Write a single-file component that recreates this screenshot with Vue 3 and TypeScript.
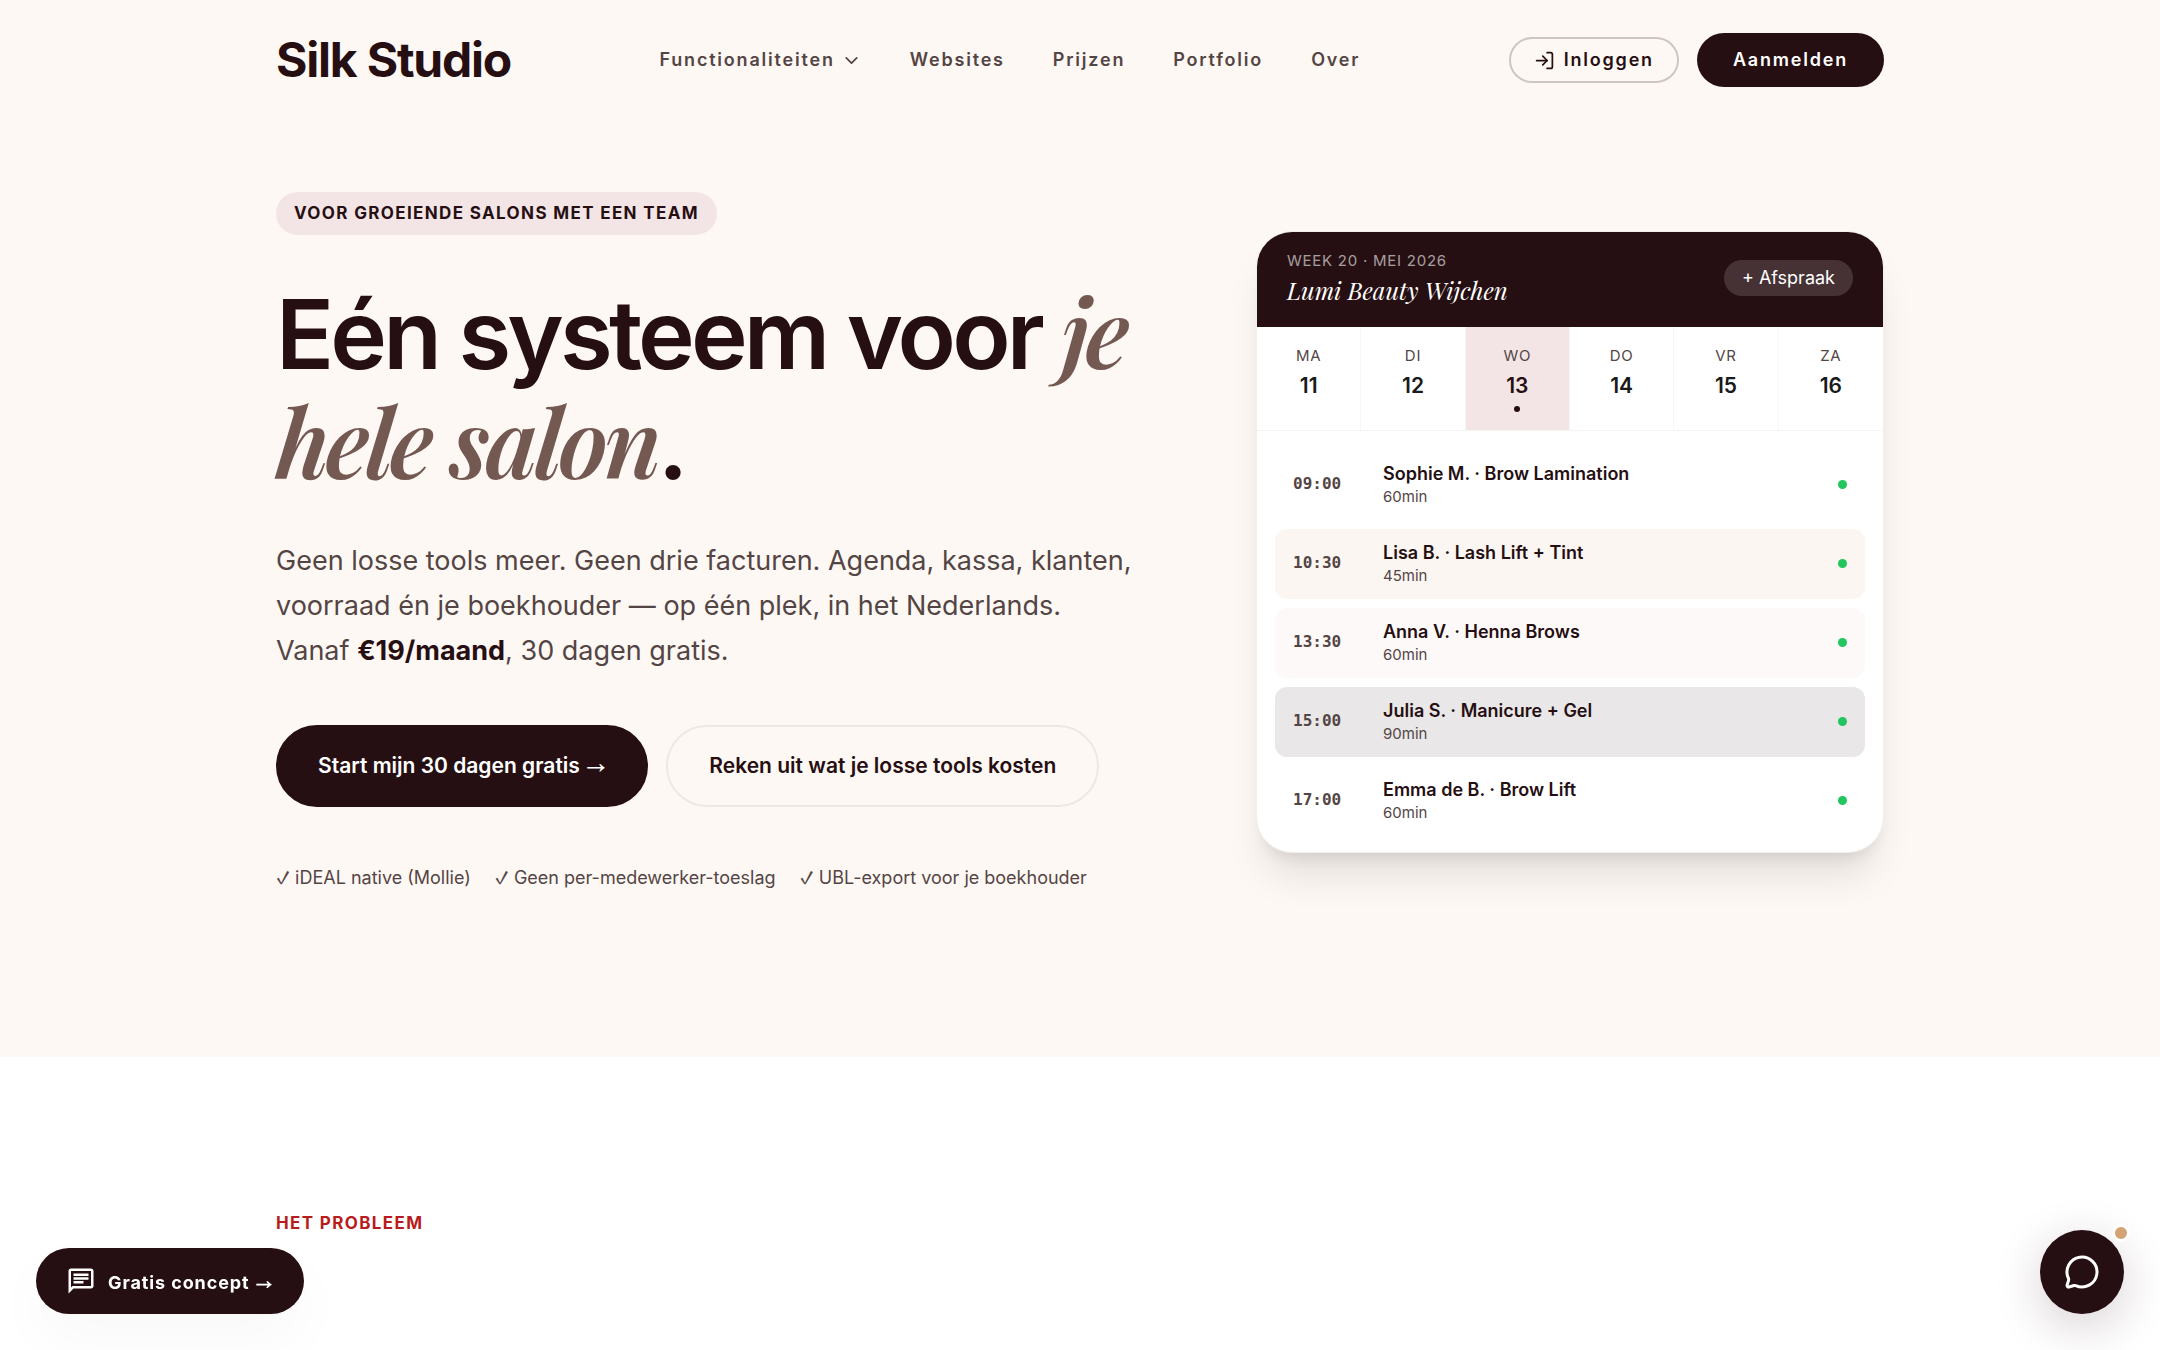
<script setup lang="ts">
interface NavItem {
  label: string
  menu?: boolean
}
interface Day {
  name: string
  date: number
  today?: boolean
}
interface Appointment {
  time: string
  title: string
  duration: string
  tone: string
}

const navItems: NavItem[] = [
  { label: 'Functionaliteiten', menu: true },
  { label: 'Websites' },
  { label: 'Prijzen' },
  { label: 'Portfolio' },
  { label: 'Over' },
]

const benefits: string[] = [
  'iDEAL native (Mollie)',
  'Geen per-medewerker-toeslag',
  'UBL-export voor je boekhouder',
]

const days: Day[] = [
  { name: 'MA', date: 11 },
  { name: 'DI', date: 12 },
  { name: 'WO', date: 13, today: true },
  { name: 'DO', date: 14 },
  { name: 'VR', date: 15 },
  { name: 'ZA', date: 16 },
]

const appointments: Appointment[] = [
  { time: '09:00', title: 'Sophie M. · Brow Lamination', duration: '60min', tone: 'plain' },
  { time: '10:30', title: 'Lisa B. · Lash Lift + Tint', duration: '45min', tone: 'cream' },
  { time: '13:30', title: 'Anna V. · Henna Brows', duration: '60min', tone: 'blush' },
  { time: '15:00', title: 'Julia S. · Manicure + Gel', duration: '90min', tone: 'grey' },
  { time: '17:00', title: 'Emma de B. · Brow Lift', duration: '60min', tone: 'plain' },
]
</script>

<template>
  <div class="page">
    <header class="wrap topbar">
      <a class="logo" href="#">Silk Studio</a>
      <nav class="nav" aria-label="Hoofdmenu">
        <template v-for="item in navItems" :key="item.label">
          <button v-if="item.menu" class="nav-item" type="button">
            {{ item.label }}
            <svg class="chevron" viewBox="0 0 24 24" aria-hidden="true"><path d="m6 9 6 6 6-6" /></svg>
          </button>
          <a v-else class="nav-item" href="#">{{ item.label }}</a>
        </template>
      </nav>
      <div class="account">
        <a class="pill login" href="#">
          <svg class="login-icon" viewBox="0 0 24 24" aria-hidden="true">
            <path d="M15 3h4a2 2 0 0 1 2 2v14a2 2 0 0 1-2 2h-4" />
            <path d="m10 17 5-5-5-5" />
            <path d="M15 12H3" />
          </svg>
          Inloggen
        </a>
        <a class="pill signup" href="#">Aanmelden</a>
      </div>
    </header>

    <main>
      <section class="wrap hero">
        <div class="intro">
          <span class="badge">VOOR GROEIENDE SALONS MET EEN TEAM</span>
          <h1>Eén systeem voor <em>je hele salon</em>.</h1>
          <p class="lead">
            Geen losse tools meer. Geen drie facturen. Agenda, kassa, klanten, voorraad én je
            boekhouder — op één plek, in het Nederlands. Vanaf <strong>€19/maand</strong>, 30 dagen
            gratis.
          </p>
          <div class="actions">
            <a class="cta primary" href="#">Start mijn 30 dagen gratis <span class="symbol arrow">→</span></a>
            <a class="cta secondary" href="#">Reken uit wat je losse tools kosten</a>
          </div>
          <ul class="benefits">
            <li v-for="benefit in benefits" :key="benefit"><span class="symbol">✓</span> {{ benefit }}</li>
          </ul>
        </div>

        <div class="agenda">
          <div class="agenda-head">
            <div>
              <div class="week">WEEK 20 · MEI 2026</div>
              <div class="salon">Lumi Beauty Wijchen</div>
            </div>
            <button class="add" type="button">+ Afspraak</button>
          </div>
          <div class="days">
            <div v-for="day in days" :key="day.name" class="day" :class="{ today: day.today }">
              <span class="day-name">{{ day.name }}</span>
              <span class="day-date">{{ day.date }}</span>
              <span v-if="day.today" class="day-dot"></span>
            </div>
          </div>
          <ul class="slots">
            <li v-for="slot in appointments" :key="slot.time" class="slot" :class="slot.tone">
              <span class="time">{{ slot.time }}</span>
              <span class="details">
                <span class="title">{{ slot.title }}</span>
                <span class="duration">{{ slot.duration }}</span>
              </span>
              <span class="status"></span>
            </li>
          </ul>
        </div>
      </section>

      <section class="problem">
        <div class="wrap">
          <p class="eyebrow">HET PROBLEEM</p>
        </div>
      </section>
    </main>

    <a class="concept" href="#">
      <svg class="concept-icon" viewBox="0 0 24 24" aria-hidden="true">
        <path
          d="M4 4h16v12H5.17L4 17.17V4m0-2c-1.1 0-1.99.9-1.99 2L2 22l4-4h14c1.1 0 2-.9 2-2V4c0-1.1-.9-2-2-2H4zm2 10h8v2H6v-2zm0-3h12v2H6V9zm0-3h12v2H6V6z"
        />
      </svg>
      <span class="concept-label">Gratis concept <span class="symbol arrow">→</span></span>
    </a>

    <button class="chat" type="button" aria-label="Open chat">
      <svg class="chat-icon" viewBox="0 0 24 24" aria-hidden="true">
        <path
          d="M2.992 16.342a2 2 0 0 1 .094 1.167l-1.065 3.29a1 1 0 0 0 1.236 1.168l3.413-.998a2 2 0 0 1 1.099.092 10 10 0 1 0-4.777-4.719"
        />
      </svg>
      <span class="chat-badge"></span>
    </button>
  </div>
</template>

<style>
body {
  margin: 0;
  background: #ffffff;
}
</style>

<style scoped>
.page {
  --ink: #260f12;
  --muted: #544545;
  --cream: #fef8f4;
  --blush: #f3e5e5;
  min-height: 100vh;
  overflow: hidden;
  background: linear-gradient(var(--cream), var(--cream)) top / 100% 120px no-repeat;
  color: var(--ink);
  font-family: Inter, 'Liberation Sans', sans-serif;
}

.page * {
  box-sizing: border-box;
}

a {
  color: inherit;
  text-decoration: none;
}

button {
  margin: 0;
  padding: 0;
  border: 0;
  background: none;
  color: inherit;
  font: inherit;
  cursor: pointer;
}

svg {
  flex: none;
  fill: none;
  stroke: currentColor;
  stroke-width: 2;
  stroke-linecap: round;
  stroke-linejoin: round;
}

ul {
  margin: 0;
  padding: 0;
  list-style: none;
}

.wrap {
  max-width: 1800px;
  margin: 0 auto;
  padding-inline: 96px;
}

main {
  background: var(--cream);
}

/* Arrow and tick come from a symbol font, the letters from Inter */
.symbol {
  font-family: 'Noto Sans Math', 'DejaVu Sans', sans-serif;
  line-height: 1;
}

.arrow {
  padding-inline: 1px;
}

.cta .arrow {
  font-size: 19px;
}

.concept .arrow {
  font-size: 16px;
}

/* Top bar */
.topbar {
  display: flex;
  align-items: center;
  justify-content: space-between;
  height: 120px;
}

.logo {
  font-size: 48px;
  font-weight: 700;
  line-height: 60px;
  letter-spacing: -0.025em;
}

.nav {
  display: flex;
  align-items: center;
  gap: 48px;
}

.nav-item {
  display: flex;
  align-items: center;
  gap: 6px;
  color: var(--muted);
  font-size: 18px;
  font-weight: 600;
  line-height: 24px;
  letter-spacing: 0.1em;
}

.chevron {
  width: 21px;
  height: 21px;
}

.account {
  display: flex;
  align-items: center;
  gap: 18px;
}

.pill {
  display: flex;
  align-items: center;
  border-radius: 60px;
  font-size: 18px;
  font-weight: 600;
  line-height: 24px;
  letter-spacing: 0.1em;
}

.login {
  gap: 9px;
  padding: 9px 23px;
  border: 2px solid #cfc6c4;
}

.login-icon {
  width: 21px;
  height: 21px;
}

.signup {
  padding: 15px 36px;
  background: var(--ink);
  color: #ffffff;
}

/* Hero */
.hero {
  display: grid;
  grid-template-columns: minmax(0, 884fr) minmax(0, 628fr);
  gap: 96px;
  align-items: center;
  padding-top: 72px;
  padding-bottom: 166px;
}

.badge {
  display: inline-block;
  padding: 9px 18px;
  border-radius: 60px;
  background: var(--blush);
  font-size: 17px;
  font-weight: 700;
  line-height: 25px;
  letter-spacing: 0.08em;
  vertical-align: top;
}

h1 {
  margin: 44px 0 39px;
  font-size: 96px;
  font-weight: 600;
  line-height: 110px;
  letter-spacing: -0.04em;
}

h1 em {
  color: #745852;
  font-family: 'Playfair Display', 'Liberation Serif', serif;
  font-style: italic;
  line-height: 1;
}

.lead {
  max-width: 860px;
  margin: 0;
  color: var(--muted);
  font-size: 27px;
  line-height: 45px;
}

.lead strong {
  color: var(--ink);
  font-weight: 700;
}

.actions {
  display: flex;
  flex-wrap: wrap;
  gap: 18px;
  margin-top: 52px;
}

.cta {
  padding: 24px 41px;
  border: 2px solid var(--ink);
  border-radius: 60px;
  font-size: 21px;
  font-weight: 600;
  line-height: 30px;
}

.primary {
  padding-inline: 40px;
  background: var(--ink);
  color: #ffffff;
}

.secondary {
  border-color: #ede8e5;
}

.benefits {
  display: flex;
  flex-wrap: wrap;
  gap: 24px;
  margin-top: 57px;
  color: var(--muted);
  font-size: 18px;
  line-height: 27px;
}

/* Agenda card */
.agenda {
  overflow: hidden;
  border: 1px solid #f1eeec;
  border-radius: 36px;
  background: #ffffff;
  box-shadow:
    0 30px 38px -8px rgba(0, 0, 0, 0.1),
    0 12px 15px -9px rgba(0, 0, 0, 0.1);
}

.agenda-head {
  display: flex;
  align-items: center;
  justify-content: space-between;
  padding: 17px 30px 20px;
  background: var(--ink);
  color: #ffffff;
}

.week {
  color: rgba(255, 255, 255, 0.6);
  font-size: 15px;
  line-height: 24px;
  letter-spacing: 0.05em;
}

.salon {
  font-family: 'Playfair Display', 'Liberation Serif', serif;
  font-size: 24px;
  font-style: italic;
  line-height: 34px;
}

.add {
  padding: 6px 18px;
  border-radius: 18px;
  background: rgba(255, 255, 255, 0.15);
  font-size: 18px;
  line-height: 24px;
}

.days {
  display: grid;
  grid-template-columns: repeat(6, 1fr);
  border-bottom: 1px solid #f6f3f3;
}

.day {
  display: flex;
  flex-direction: column;
  align-items: center;
  height: 103px;
  padding-top: 18px;
  border-right: 1px solid #f8f6f6;
}

.day:last-child {
  border-right: 0;
}

.day.today {
  background: var(--blush);
}

.day-name {
  color: var(--muted);
  font-size: 15px;
  line-height: 22px;
  letter-spacing: 0.05em;
}

.day-date {
  margin-top: 4px;
  color: #1a1a1a;
  font-size: 21px;
  font-weight: 600;
  line-height: 30px;
}

.today .day-date {
  color: var(--ink);
}

.day-dot {
  width: 6px;
  height: 6px;
  margin-top: 5px;
  border-radius: 50%;
  background: var(--ink);
}

.slots {
  display: flex;
  flex-direction: column;
  gap: 9px;
  padding: 19px 18px 16px;
}

.slot {
  display: flex;
  align-items: center;
  gap: 18px;
  height: 70px;
  padding-inline: 18px;
  border-radius: 12px;
}

.slot.cream {
  background: #fbf6f2;
}

.slot.blush {
  background: #fdf9f8;
}

.slot.grey {
  background: #e9e7e7;
}

.time {
  width: 72px;
  padding-bottom: 2px;
  color: var(--muted);
  font-family: 'DejaVu Sans Mono', monospace;
  font-size: 16px;
  font-weight: 700;
  line-height: 24px;
}

.details {
  display: flex;
  flex: 1;
  flex-direction: column;
}

.title {
  font-size: 18px;
  font-weight: 600;
  line-height: 25px;
}

.duration {
  color: var(--muted);
  font-size: 15px;
  line-height: 22px;
}

.status {
  width: 9px;
  height: 9px;
  border-radius: 50%;
  background: #22c55e;
}

/* Problem section */
.problem {
  min-height: 293px;
  padding-block: 153px;
  background: #ffffff;
}

.eyebrow {
  margin: 0;
  color: #b91c1c;
  font-size: 17px;
  font-weight: 700;
  line-height: 26px;
  letter-spacing: 0.08em;
}

/* Floating actions */
.concept {
  position: fixed;
  bottom: 36px;
  left: 36px;
  display: flex;
  align-items: center;
  gap: 12px;
  height: 66px;
  padding-inline: 30px;
  border-radius: 33px;
  background: var(--ink);
  box-shadow: 0 24px 60px rgba(38, 15, 18, 0.03);
  color: #ffffff;
  font-size: 18px;
  font-weight: 700;
  letter-spacing: 0.05em;
}

.concept-label {
  padding-top: 2px;
}

.concept-icon {
  width: 30px;
  height: 30px;
  fill: currentColor;
  stroke: none;
}

.chat {
  position: fixed;
  right: 36px;
  bottom: 36px;
  display: flex;
  align-items: center;
  justify-content: center;
  width: 84px;
  height: 84px;
  border-radius: 50%;
  background: var(--ink);
  box-shadow: 0 12px 48px rgba(60, 15, 30, 0.2);
  color: #ffffff;
}

.chat-icon {
  width: 36px;
  height: 36px;
}

.chat-badge {
  position: absolute;
  top: -6px;
  right: -6px;
  width: 18px;
  height: 18px;
  border: 3px solid #ffffff;
  border-radius: 50%;
  background: #d4a373;
}
</style>
